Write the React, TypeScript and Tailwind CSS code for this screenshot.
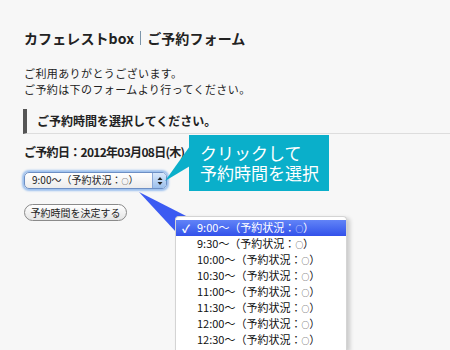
import React from "react";

const times = ["9:00", "9:30", "10:00", "10:30", "11:00", "11:30", "12:00", "12:30", "13:00"];

function Status({ time }: { time: string }) {
  return (
    <span>
      {time}～（予約状況：<span className="text-[0.7em]">○</span>）
    </span>
  );
}

export default function App() {
  const font = { fontFamily: '"Noto Sans CJK JP", "Noto Sans", sans-serif' };
  return (
    <div
      className="relative w-[450px] h-[350px] overflow-hidden bg-[#f7f7f7] text-[#222] px-[24px] pt-[28px]"
      style={font}
    >
      <h1 className="text-[14px] leading-[20px] font-bold tracking-[0.1px] flex items-center">
        <span>カフェレストbox</span>
        <span className="inline-block w-[1px] h-[14px] bg-[#7c95aa] mx-[6px]" />
        <span>ご予約フォーム</span>
      </h1>
      <div className="mt-[17px] text-[11px] leading-[16px] tracking-[0.4px]">
        <p>ご利用ありがとうございます。</p>
        <p>ご予約は下のフォームより行ってください。</p>
      </div>
      <div className="mt-[12px] -ml-[1px] -mr-[24px] h-[25px] flex items-center border-l-4 border-l-[#555] border-b border-b-[#dddddd] pl-[10px]">
        <span className="text-[12px] font-bold leading-[16px]">ご予約時間を選択してください。</span>
      </div>
      <div className="mt-[10px] w-fit text-[12px] font-bold leading-[16px] tracking-[-0.7px]">ご予約日：2012年03月08日(木)</div>
      <div className="mt-[12px] w-[143px] h-[17px] rounded-[5px] border border-[#6d8fc4] shadow-[0_0_2px_2px_#9cc0ee] bg-gradient-to-b from-white to-[#ececec] flex items-center overflow-hidden">
        <span className="flex-1 pl-[7px] text-[10px] leading-[15px]">
          <Status time="9:00" />
        </span>
        <span className="w-[14px] h-full border-l border-[#8aa7d6] bg-gradient-to-b from-[#d9e8fb] to-[#9bbfeb] flex flex-col items-center justify-center">
          <svg width="6" height="10" viewBox="0 0 6 10">
            <path d="M3 1 L5.5 4 L0.5 4 Z" fill="#222" />
            <path d="M3 9 L5.5 6 L0.5 6 Z" fill="#222" />
          </svg>
        </span>
      </div>
      <button className="mt-[15px] h-[17px] w-[103px] rounded-full border border-[#8a8a8a] bg-gradient-to-b from-white to-[#e4e4e4] text-[10px] leading-[15px] text-[#222] flex items-center justify-center">
        予約時間を決定する
      </button>

      {/* pointers */}
      <svg className="absolute left-0 top-0 pointer-events-none" width="450" height="350">
        <polygon points="165,181 190,146 190,166" fill="#0aafca" />
        <polygon points="139,192 192,219 176,232" fill="#3c5bf2" />
      </svg>

      {/* callout */}
      <div className="absolute left-[189px] top-[135px] w-[140px] h-[56px] bg-[#0aafca] text-white text-[17px] leading-[20px] pl-[11px] pt-[8px]">
        <div>クリックして</div>
        <div>予約時間を選択</div>
      </div>

      {/* dropdown menu */}
      <div className="absolute left-[175px] top-[216px] w-[172px] h-[134px] bg-white rounded-t-[4px] border border-b-0 border-[#d4d4d4] shadow-[3px_2px_4px_rgba(0,0,0,0.18)] pt-[3px] overflow-hidden">
        {times.map((t, i) => (
          <div
            key={t}
            className={
              i === 0
                ? "relative h-[16px] flex items-center pl-[21px] text-[11px] leading-[16px] text-white bg-gradient-to-b from-[#6283f7] to-[#3350ea]"
                : "relative h-[16px] flex items-center pl-[21px] text-[11px] leading-[16px] text-[#111]"
            }
          >
            {i === 0 && <span className="absolute left-[6px] text-[11px] font-bold">✓</span>}
            <Status time={t} />
          </div>
        ))}
      </div>
    </div>
  );
}
